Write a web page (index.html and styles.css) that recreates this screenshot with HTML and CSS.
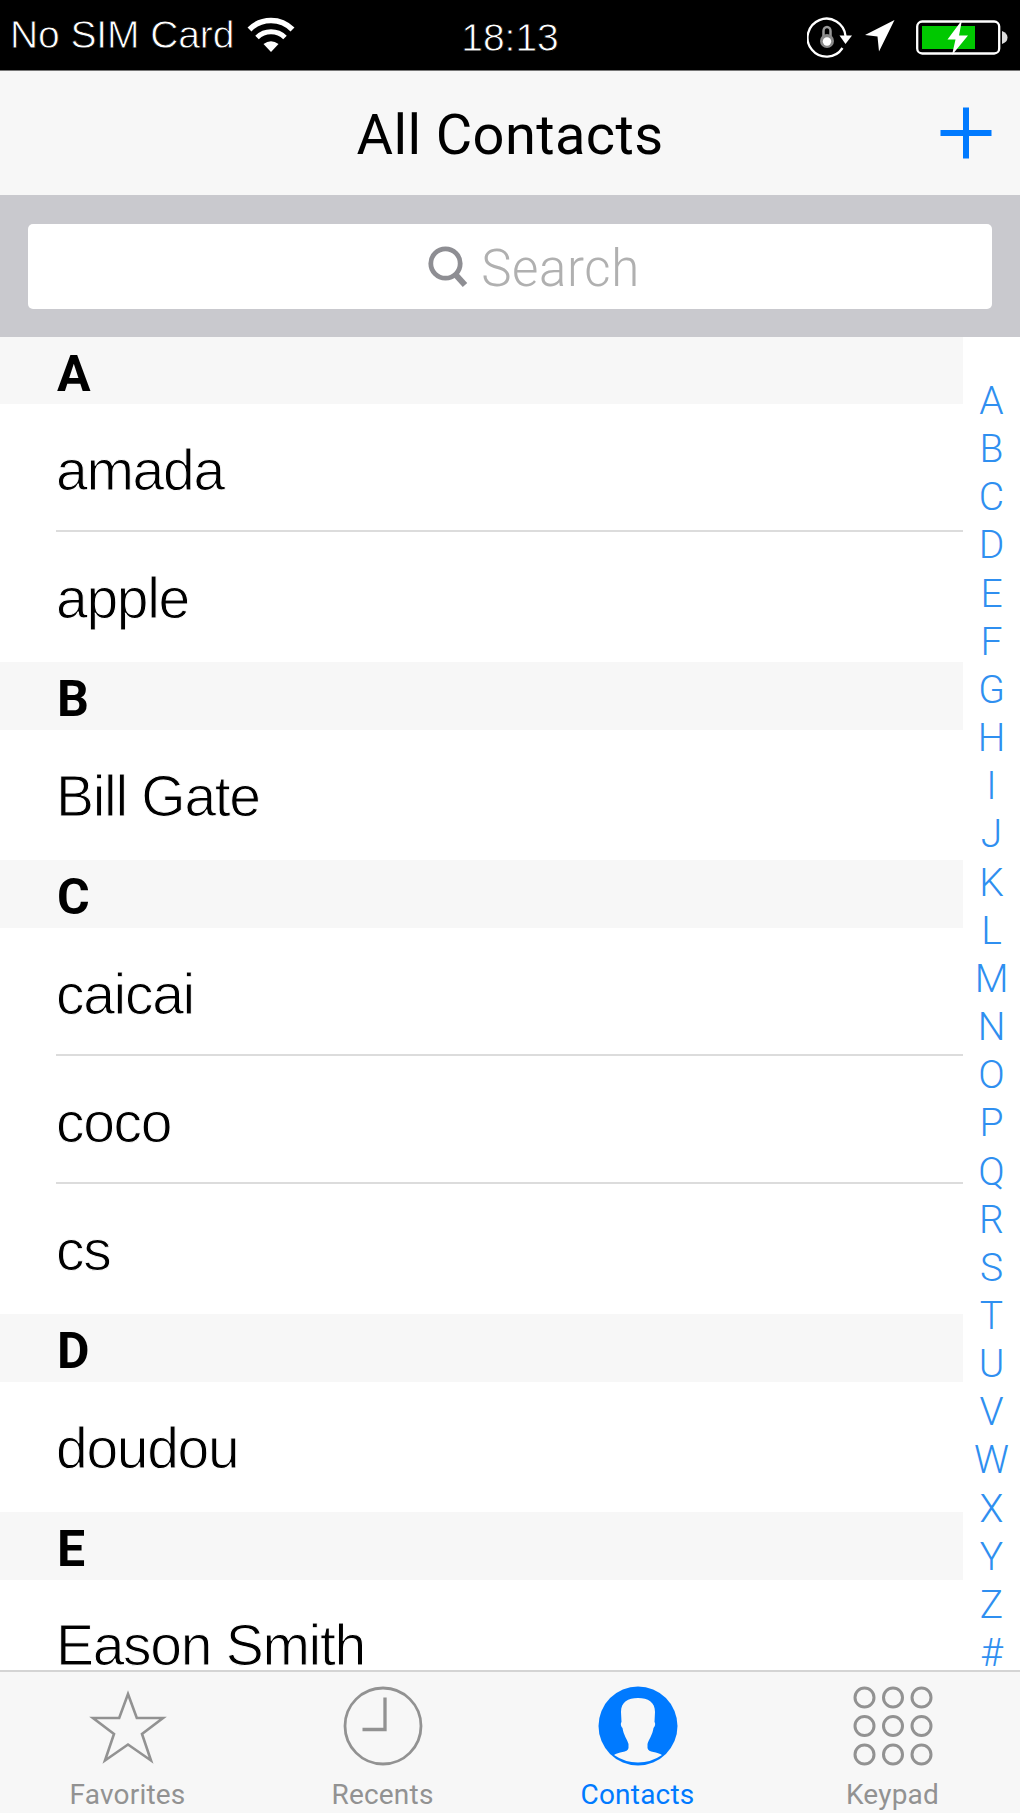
FILE: index.html
```html
<!DOCTYPE html>
<html>
<head>
  <title>All Contacts</title>
  <meta charset="UTF-8">
  <meta name="viewport" content="width=device-width, initial-scale=1.0">
  <link rel="stylesheet" href="styles.css">
</head>
<body>
  <div class="status-bar">
    <div class="status-left">
      <span class="carrier">No SIM Card</span>
      <svg class="wifi" width="50" height="36" viewBox="0 0 50 36">
        <g fill="none" stroke="#fff">
          <path d="M3.500 12.500 A30 30 0 0 1 46.500 12.500" stroke-width="5.500"/>
          <path d="M11 20.500 A20 20 0 0 1 39 20.500" stroke-width="5"/>
        </g>
        <path d="M17.500 27 Q25 21.500 32.500 27 L25 35 Z" fill="#fff"/>
      </svg>
    </div>
    <span class="time">18:13</span>
    <div class="status-right">
      <svg width="46" height="42" viewBox="0 0 46 42">
        <path d="M38.500 19 A19 19 0 1 0 35.500 31" fill="none" stroke="#fff" stroke-width="2.300"/>
        <path d="M32.500 18.500 H45 L38.500 27 Z" fill="#fff"/>
        <path d="M16.500 19 V14 A3.500 4 0 0 1 23.500 14 V19" fill="none" stroke="#999" stroke-width="2.500"/>
        <circle cx="20" cy="24" r="7" fill="#888"/>
        <circle cx="20" cy="24.500" r="4.200" fill="#fff"/>
      </svg>
      <svg class="location" width="30" height="32" viewBox="0 0 30 32">
        <path d="M29.500 0 L14 31.500 L12.500 16.500 L0 15 Z" fill="#fff"/>
      </svg>
      <svg width="92" height="36" viewBox="0 0 92 36">
        <rect x="1.200" y="1.500" width="82" height="32" rx="5" fill="none" stroke="#fff" stroke-width="2.300"/>
        <path d="M86 11 Q91.500 13 91.500 17.500 Q91.500 22 86 24 Z" fill="#ddd"/>
        <rect x="6" y="6" width="53" height="23" fill="#00c800"/>
        <path d="M46 0 L31.500 19.500 H39.500 L36 35 L52 15.500 H43 Z" fill="#fff"/>
      </svg>
    </div>
  </div>

  <header class="nav-bar">
    <h1>All Contacts</h1>
    <svg class="add" width="52" height="52" viewBox="0 0 52 52">
      <path d="M26 0.500 V51.500 M0.500 26 H51.500" stroke="#007aff" stroke-width="6"/>
    </svg>
  </header>

  <div class="search-bar">
    <div class="search-field">
      <svg width="40" height="42" viewBox="0 0 40 42">
        <circle cx="17.500" cy="17.500" r="14.700" fill="none" stroke="#8e8e93" stroke-width="4.800"/>
        <path d="M27 28 L37 39" stroke="#8e8e93" stroke-width="6"/>
      </svg>
      <span>Search</span>
    </div>
  </div>

  <main class="content">
    <div class="contacts">
      <h2>A</h2>
      <ul>
        <li>amada</li>
        <li>apple</li>
      </ul>
      <h2>B</h2>
      <ul>
        <li>Bill Gate</li>
      </ul>
      <h2>C</h2>
      <ul>
        <li>caicai</li>
        <li>coco</li>
        <li>cs</li>
      </ul>
      <h2>D</h2>
      <ul>
        <li>doudou</li>
      </ul>
      <h2>E</h2>
      <ul>
        <li>Eason Smith</li>
      </ul>
    </div>
    <div class="index">
      <span>A</span>
      <span>B</span>
      <span>C</span>
      <span>D</span>
      <span>E</span>
      <span>F</span>
      <span>G</span>
      <span>H</span>
      <span>I</span>
      <span>J</span>
      <span>K</span>
      <span>L</span>
      <span>M</span>
      <span>N</span>
      <span>O</span>
      <span>P</span>
      <span>Q</span>
      <span>R</span>
      <span>S</span>
      <span>T</span>
      <span>U</span>
      <span>V</span>
      <span>W</span>
      <span>X</span>
      <span>Y</span>
      <span>Z</span>
      <span>#</span>
    </div>
  </main>

  <nav class="tab-bar">
    <div class="tab">
      <svg width="80" height="80" viewBox="0 0 80 80">
        <path d="M40 8 L48.800 32 H75 L54 48 L63 74.500 L40 58.500 L17 74.500 L26 48 L5 32 H31.200 Z" fill="none" stroke="#929292" stroke-width="2.600"/>
      </svg>
      <span>Favorites</span>
    </div>
    <div class="tab">
      <svg width="80" height="80" viewBox="0 0 80 80">
        <circle cx="40" cy="40" r="38" fill="none" stroke="#929292" stroke-width="2.800"/>
        <path d="M42 11.500 V43.500 H19.500" fill="none" stroke="#929292" stroke-width="3.300"/>
      </svg>
      <span>Recents</span>
    </div>
    <div class="tab active">
      <svg width="80" height="80" viewBox="0 0 80 80">
        <circle cx="40" cy="40" r="39.500" fill="#007aff"/>
        <path d="M40 12 C50 12 57 16 57 26 L56.500 36 C58 38 56.500 41 55.500 42 C54.500 49 50.500 54 49.500 58 V62 C50 67 60 65.500 64 69 Q53 76.500 40 76.500 Q27 76.500 16 69 C20 65.500 30 67 30.500 62 V58 C29.500 54 25.500 49 24.500 42 C23.500 41 22 38 23.500 36 L23 26 C23 16 30 12 40 12 Z" fill="#f7f7f7"/>
      </svg>
      <span>Contacts</span>
    </div>
    <div class="tab">
      <svg width="80" height="80" viewBox="0 0 80 80">
        <g fill="none" stroke="#929292" stroke-width="3">
          <circle cx="11.500" cy="11.500" r="9.500"/>
          <circle cx="40" cy="11.500" r="9.500"/>
          <circle cx="68.500" cy="11.500" r="9.500"/>
          <circle cx="11.500" cy="40" r="9.500"/>
          <circle cx="40" cy="40" r="9.500"/>
          <circle cx="68.500" cy="40" r="9.500"/>
          <circle cx="11.500" cy="68.500" r="9.500"/>
          <circle cx="40" cy="68.500" r="9.500"/>
          <circle cx="68.500" cy="68.500" r="9.500"/>
        </g>
      </svg>
      <span>Keypad</span>
    </div>
  </nav>
</body>
</html>
```
FILE: styles.css
```css
* {
  box-sizing: border-box;
}

body {
  margin: 0;
  height: 1813px;
  display: flex;
  flex-direction: column;
  overflow: hidden;
  background-color: white;
  font-family: Roboto, sans-serif;
}

svg {
  display: block;
  flex: none;
}

.status-bar {
  height: 71px;
  flex: none;
  display: grid;
  grid-template-columns: 1fr auto 1fr;
  background-color: black;
  border-bottom: 1px solid #777;
  color: white;
  font: 39px/70px "Liberation Sans", Arial, sans-serif;
  -webkit-text-stroke: 0.8px black;
}

.status-left {
  display: flex;
  padding-left: 10px;
}

.carrier {
  letter-spacing: -0.1px;
  line-height: 70px;
  white-space: nowrap;
}

.wifi {
  margin: 17px 0 0 12px;
}

.time {
  line-height: 75px;
}

.status-right {
  display: flex;
  justify-content: flex-end;
  align-items: center;
  gap: 12px;
  padding-right: 12px;
}

.location {
  margin: 0 9px 4px 0;
}

.nav-bar {
  height: 124px;
  flex: none;
  display: grid;
  grid-template-columns: 1fr auto 1fr;
  align-items: center;
  padding-right: 28px;
  padding-left: 28px;
  background-color: #f7f7f7;
}

.nav-bar h1 {
  grid-column: 2;
  margin: 0;
  padding-top: 3px;
  font-size: 56px;
  font-weight: 400;
  letter-spacing: 0.4px;
}

.add {
  justify-self: end;
}

.search-bar {
  height: 142px;
  flex: none;
  padding: 29px 28px 28px;
  background-color: #c9c9ce;
}

.search-field {
  height: 85px;
  display: flex;
  justify-content: center;
  align-items: center;
  gap: 13px;
  padding-left: 48px;
  border-radius: 5px;
  background-color: white;
  color: #b0b0b0;
  font-size: 51px;
  font-weight: 350;
  letter-spacing: 0.6px;
}

.search-field span {
  padding-top: 4px;
}

.content {
  flex: 1;
  min-height: 0;
  display: flex;
  overflow: hidden;
}

.contacts {
  width: 963px;
}

.contacts h2 {
  height: 68px;
  margin: 0;
  padding-left: 57px;
  background-color: #f7f7f7;
  font-size: 50px;
  font-weight: 700;
  line-height: 74px;
}

.contacts h2:first-child {
  height: 67px;
}

.contacts ul {
  margin: 0;
  padding: 0 0 0 56px;
  list-style: none;
}

.contacts li {
  height: 128px;
  border-bottom: 2px solid #dcdcdc;
  font: 57px/133px "Liberation Sans", Arial, sans-serif;
  letter-spacing: -1.3px;
  -webkit-text-stroke: 1px white;
}

.contacts li:last-child {
  height: 130px;
  border-bottom: none;
}

.contacts ul:last-child li {
  height: 91px;
  line-height: 130px;
}

.index {
  flex: 1;
  display: flex;
  flex-direction: column;
  align-items: center;
  padding-top: 40px;
  color: #2f8ff0;
  font-size: 39px;
  font-weight: 350;
  line-height: 48.15px;
}

.tab-bar {
  height: 143px;
  flex: none;
  display: flex;
  border-top: 2px solid #d4d4d4;
  background-color: #f7f7f7;
  color: #929292;
  font-size: 28px;
}

.tab {
  flex: 1;
  display: flex;
  flex-direction: column;
  align-items: center;
  padding-top: 14px;
}

.tab span {
  margin-top: 12px;
  line-height: 33px;
  letter-spacing: 0.2px;
}

.tab.active {
  color: #007aff;
}
```
